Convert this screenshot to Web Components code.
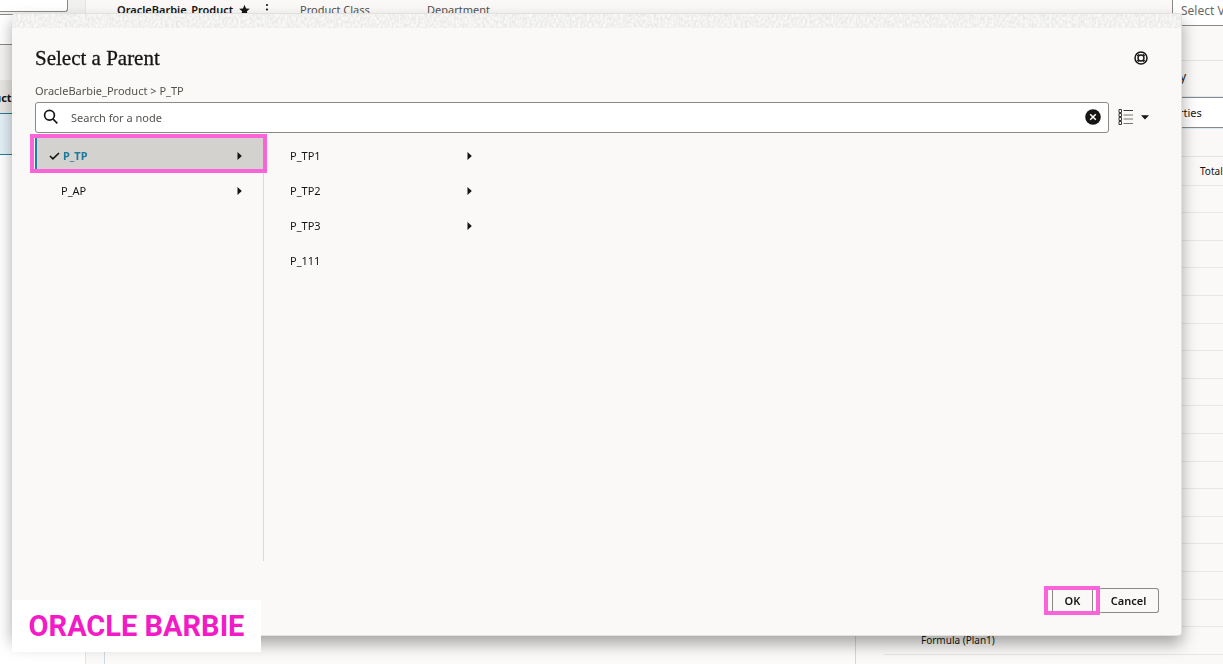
<!DOCTYPE html>
<html lang="en">
<head>
<meta charset="utf-8">
<title>Select a Parent</title>
<style>
  html, body { height: 100%; margin: 0; }
  body { font: 12px/16px "Noto Sans", sans-serif; color: #161513; background: #faf9f7; overflow: hidden; }
</style>
</head>
<body>
<app-shell>
  <side-panel slot="left"></side-panel>
  <node-header slot="main"></node-header>
  <property-panel slot="right"></property-panel>
</app-shell>
<parent-dialog heading="Select a Parent" path="OracleBarbie_Product > P_TP">
  <node-list slot="nodes" kind="parents">
    <node-item selected expandable>P_TP</node-item>
    <node-item expandable>P_AP</node-item>
  </node-list>
  <node-list slot="nodes">
    <node-item expandable>P_TP1</node-item>
    <node-item expandable>P_TP2</node-item>
    <node-item expandable>P_TP3</node-item>
    <node-item>P_111</node-item>
  </node-list>
</parent-dialog>
<brand-tag>ORACLE BARBIE</brand-tag>

<script>
function define(name, html, setup) {
  customElements.define(name, class extends HTMLElement {
    connectedCallback() {
      if (this.shadowRoot) return;
      const t = document.createElement('template');
      t.innerHTML = '<style>*{box-sizing:border-box}</style>' + html;
      this.attachShadow({ mode: 'open' }).append(t.content.cloneNode(true));
      if (setup) setup(this, this.shadowRoot);
    }
  });
}

define('app-shell', `
<style>
  :host { display: grid; grid-template-columns: 85px 1fr 367px; height: 100vh; overflow: hidden; }
  main { border-left: 1px solid #e6e4e1; display: flex; flex-direction: column; min-width: 0; }
  .canvas { flex: 1; margin-left: 18px; border: solid #cfd8df; border-width: 0 1px; background: #fbfaf8; }
  ::slotted([slot=right]) { min-width: 0; }
</style>
<slot name="left"></slot>
<main><slot name="main"></slot><div class="canvas"></div></main>
<slot name="right"></slot>`);

define('side-panel', `
<style>
  :host { display: flex; flex-direction: column; background: #fff; overflow: hidden; }
  .top { background: #f1f1f0; height: 14px; }
  input { display: block; width: 68px; height: 12px; border: 1px solid #8b8986; border-width: 0 1px 1px 0; border-radius: 0 0 3px 0; background: #fff; padding: 0; }
  .box { height: 31px; border: solid #8b8986; border-width: 1px 0; background: #fff; }
  .gap { height: 35px; background: #f5f4f2; }
  .head { height: 34px; padding: 10px 0; background: #e9e7e4; border-bottom: 1px solid #227e9e; font-size: 11px; font-weight: 700; text-indent: -6px; }
  .row { height: 41px; background: #e4f1f7; border-bottom: 1px solid #227e9e; }
</style>
<div class="top"><input aria-label="Dimension"></div>
<div class="box"></div><div class="gap"></div><div class="head">uct</div><div class="row"></div>`);

define('node-header', `
<style>
  :host { display: flex; align-items: center; height: 20px; padding-left: 31px; flex: none; font-size: 11px; white-space: nowrap; color: #55524e; }
  b { color: #161513; width: 121px; font-weight: 600; }
  svg { flex: none; fill: #161513; }
  .kebab { margin: 0 31px 0 14px; }
  .cls { width: 127px; }
</style>
<b>OracleBarbie_Product</b>
<svg width="13" height="12" viewBox="0 0 13 12"><path d="M6.500.8 8 4.400l3.800.3-2.900 2.500.9 3.800-3.300-2-3.300 2 .9-3.800-2.900-2.500 3.800-.3z"/></svg>
<svg class="kebab" width="4" height="14" viewBox="0 0 4 14"><circle cx="2" cy="2" r="1.100"/><circle cx="2" cy="6.500" r="1.100"/><circle cx="2" cy="11" r="1.100"/></svg>
<span class="cls">Product Class</span><span>Department</span>`);

define('property-panel', `
<style>
  :host { display: block; padding-left: 28px; overflow: hidden; }
  select, input { appearance: none; display: block; font: inherit; font-size: 11px; margin: 0; border: 1px solid #8b8986; background: #fff; width: 100%; border-radius: 0; }
  select { width: auto; height: 30px; margin: -4px 0 0 288px; padding: 0 8px; color: #6b6864; font-size: 12px; border-right: 0; }
  .first { height: 35px; border-bottom: 1px solid #e6e4e1; }
  .label { display: block; height: 36px; padding: 8px 0 0 296px; font-size: 12px; }
  input { height: 31px; padding: 0 0 0 294px; border-right: 0; box-shadow: 0 0 0 1px #dcebf3; color: #161513; }
  .space { height: 29px; border-bottom: 1px solid #e6e4e1; }
  table { border-collapse: collapse; width: 100%; font-size: 10px; line-height: 16px; table-layout: fixed; }
  td { height: 28px; padding: 0; border-bottom: 1px solid #e9e7e4; white-space: nowrap; }
  tr:nth-child(5n+2) td, tr:nth-child(5n+4) td { height: 27px; }
  .n { padding-left: 37px; }
  col:first-child { width: 316px; }
</style>
<select aria-label="View"><option>Select View</option></select>
<div class="first"></div>
<label class="label" for="p">y</label>
<input id="p" value="rties">
<div class="space"></div>
<table><colgroup><col><col></colgroup><tbody></tbody></table>`, (h, r) => {
  const body = r.querySelector('tbody');
  for (let i = 0; i < 18; i++) {
    const tr = body.insertRow();
    const a = tr.insertCell(), b = tr.insertCell();
    a.className = 'n';
    if (i === 0) b.textContent = 'Total';
    if (i === 17) a.textContent = 'Formula (Plan1)';
  }
});

define('parent-dialog', `
<style>
  :host { position: fixed; inset: 13px 41px 28px 12px; display: flex; flex-direction: column; background: #faf9f7; border: solid #e2e1df; border-width: 1px 1px 1px 0; border-radius: 4px; box-shadow: 0 8px 16px 0 rgba(0,0,0,.34); }
  .band { display: block; width: 100%; height: 14px; flex: none; background: #e9e8e6; border-radius: 4px 4px 0 0; }
  .body { flex: 1; display: flex; flex-direction: column; padding: 15px 22px 22px 23px; min-height: 0; }
  header { display: flex; align-items: center; height: 29px; justify-content: space-between; padding-right: 11px; }
  h1 { margin: 0; font: 400 21px/28px "Liberation Serif", serif; -webkit-text-stroke: .3px; }
  button { font: inherit; color: inherit; background: none; border: 0; padding: 0; margin: 0; }
  button svg { display: block; }
  .path { margin: 11px 0 3px; color: #55524e; font-size: 11px; line-height: 16px; }
  .search { display: flex; align-items: center; padding-right: 10px; }
  .field { flex: 1; display: flex; align-items: center; height: 31px; border: 1px solid #8b8986; border-radius: 3px; background: #fff; padding: 0 7px 0 7px; }
  .field svg { margin-bottom: 2px; }
  input { flex: 1; border: 0; outline: 0; background: none; font: inherit; font-size: 11px; padding: 0; margin-left: 12px; min-width: 0; }
  input::placeholder { color: #55524e; opacity: 1; }
  .view { display: flex; align-items: center; gap: 8px; margin-left: 9px; }
  .nodes { flex: 1; display: flex; padding-top: 5px; min-height: 0; margin-bottom: 27px; }
  footer { display: flex; justify-content: flex-end; }
  footer button { height: 25px; font-weight: 600; font-size: 11px; border: 1px solid #8b8986; border-radius: 3px; }
  .ok { width: 41px; border-radius: 0; }
  .cancel { width: 60px; border-left: 0; }
  .mark { position: relative; margin-right: 6px; }
  .mark::after { content: ""; position: absolute; inset: -2px -7px -2px -8px; border: 4px solid #fb63d8; pointer-events: none; }
</style>
<svg class="band" aria-hidden="true"><filter id="grain" x="0" y="0" width="100%" height="100%"><feTurbulence type="fractalNoise" baseFrequency=".45 .3" numOctaves="2" seed="4"/><feColorMatrix values="0 0 0 0 .96  0 0 0 0 .96  0 0 0 0 .95  2 0 0 0 -.5"/></filter><rect width="100%" height="100%" filter="url(#grain)"/></svg>
<div class="body">
  <header><h1></h1><button aria-label="Help"><svg width="14" height="14" viewBox="0 0 14 14" fill="none" stroke="#161513"><circle cx="7" cy="7" r="6" stroke-width="1.500"/><circle cx="7" cy="7" r="3" stroke-width="1.400"/><path d="m2.300 3.300 2.100 1.900m-1.100-2.900 1.900 2.100m6.500-1.100L9.600 5.200m1.100-2.900L8.800 4.400m-6.500 6.300 2.100-1.900m-1.100 2.900 1.900-2.100m6.500 1.100L9.600 8.800m1.100 2.900L8.800 9.600" stroke-width="1"/></svg></button></header>
  <div class="path"></div>
  <div class="search">
    <div class="field">
      <svg width="16" height="16" viewBox="0 0 16 16" fill="none" stroke="#161513" stroke-width="1.700"><circle cx="6.500" cy="6.300" r="4.900"/><path d="m10 10 4.300 4.300"/></svg>
      <input aria-label="Search for a node" placeholder="Search for a node">
      <button aria-label="Clear"><svg width="16" height="16" viewBox="0 0 16 16"><circle cx="8" cy="8" r="7.800" fill="#161513"/><path d="m5.200 5.200 5.600 5.600m0-5.600-5.600 5.600" stroke="#fff" stroke-width="1.500"/></svg></button>
    </div>
    <button class="view" aria-label="View options">
      <svg width="15" height="18" viewBox="0 0 15 18" fill="none" stroke="#3b3936"><path d="M1 .5h2.500v3H1zm0 4h2.500v3H1zm0 4h2.500v3H1zm0 4h2.500v3H1z"/><path d="M5.500 1.500H15"/><path d="M5.500 6H15m-9.500 4H15m-9.500 4.500H15" stroke="#77746f"/></svg>
      <svg width="8" height="5" viewBox="0 0 8 5"><path d="M0 .3h8L4 4.600z" fill="#161513"/></svg>
    </button>
  </div>
  <div class="nodes"><slot name="nodes"></slot></div>
  <footer><div class="mark"><button class="ok">OK</button></div><button class="cancel">Cancel</button></footer>
</div>`, (h, r) => {
  r.querySelector('h1').textContent = h.getAttribute('heading');
  r.querySelector('.path').textContent = h.getAttribute('path');
});

define('node-list', `
<style>
  :host { display: block; width: 229px; box-sizing: border-box; }
  :host([kind=parents]) { border-right: 1px solid #d5dade; }
</style>
<slot></slot>`);

define('node-item', `
<style>
  :host { display: block; height: 35px; }
  .row { position: relative; display: flex; align-items: center; width: 100%; height: 35px; padding: 0 21px 0 26px; border: 0; background: none; font: inherit; font-size: 11px; color: inherit; text-align: left; }
  .text { flex: 1; }
  .check, .arrow { display: none; flex: none; }
  :host([expandable]) .arrow { display: block; }
  :host([selected]) .row { background: #d4d2cf; border-left: 2px solid #227e9e; padding-left: 12px; font-weight: 700; color: #1c7a9b; }
  :host([selected]) .check { display: block; margin-right: 3px; }
  :host([selected]) .row::after { content: ""; position: absolute; inset: -4px -4px 0 -7px; border: 4px solid #fb63d8; }
</style>
<button class="row"><svg class="check" width="11" height="8" viewBox="0 0 11 8"><path d="m1 4 2.900 2.800L10 1" fill="none" stroke="#161513" stroke-width="1.700"/></svg><span class="text"><slot></slot></span><svg class="arrow" width="5" height="8" viewBox="0 0 5 8"><path d="M.5 0 4.800 4 .5 8z" fill="#161513"/></svg></button>`);

define('brand-tag', `
<style>
  :host { position: fixed; left: 12px; bottom: 12px; width: 249px; height: 52px; background: #fff; color: #f21bc6; font: 700 29px/52px Roboto, sans-serif; text-align: center; white-space: nowrap; }
</style>
<slot></slot>`);
</script>
</body>
</html>
